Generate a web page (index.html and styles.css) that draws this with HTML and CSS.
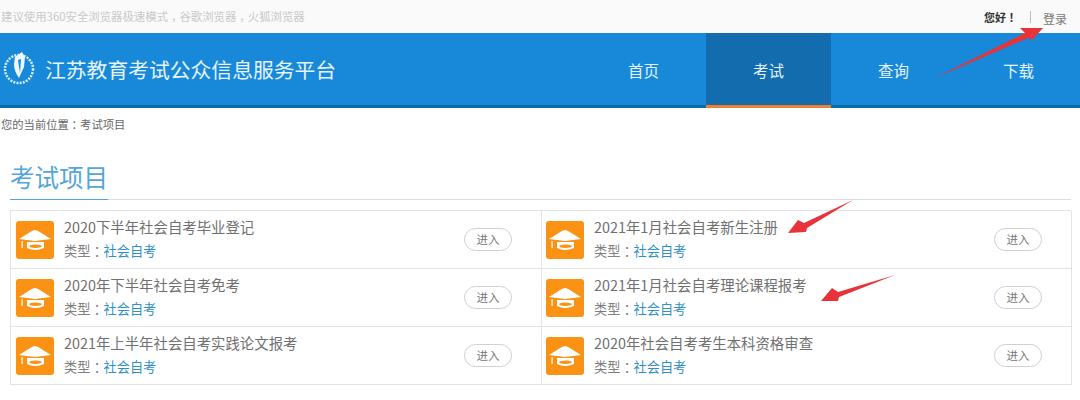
FILE: index.html
```html
<!DOCTYPE html>
<html lang="zh-CN">

<head>
  <meta charset="UTF-8">
  <title>江苏教育考试公众信息服务平台</title>
  <link rel="stylesheet" href="styles.css">
</head>

<body>

  <svg width="0" height="0" class="defs">
    <symbol id="cap" viewBox="0 0 38 38">
      <path d="M19 9 Q21 9 23 10.5 L35 18 L19 20 L3 18 L15 10.5 Q17 9 19 9 Z" fill="#fff" />
      <path d="M11 21 L28 21 L28 27 Q19 31 11 27 Z" fill="#fff" />
      <path d="M13.5 24.5 Q19 22.5 25.5 24.5 L25.5 26 Q19 28 13.5 26 Z" fill="#fb9214" />
      <rect x="5.5" y="20" width="1.2" height="7" fill="#fff" />
    </symbol>
  </svg>

  <div class="topbar">
    <span class="tip">建议使用360安全浏览器极速模式<span class="mark">，</span>谷歌浏览器<span class="mark">，</span>火狐浏览器</span>
    <div class="user">
      <b>您好<span class="mark">！</span></b>
      <i class="sep"></i>
      <a href="#">登录</a>
    </div>
  </div>

  <div class="header">
    <div class="brand">
      <svg class="logo" width="34" height="36" viewBox="0 0 34 36">
        <circle cx="17" cy="20" r="14" fill="none" stroke="#d5ecfa" stroke-width="2.5" stroke-dasharray="2 1.2" />
        <path d="M10 20 Q13 27 17 29 Q22 26 24 20 Z" fill="#1789d8" />
        <path d="M13 8 L20 3 L23 8 L22 18 L17 29 Q12 22 12 15 Z" fill="#eef7fd" />
        <path d="M16 11 L19 10 L18 24 Z" fill="#1789d8" />
      </svg>
      <span class="brand-name">江苏教育考试公众信息服务平台</span>
    </div>
    <ul class="nav">
      <li>首页</li>
      <li class="active">考试</li>
      <li>查询</li>
      <li>下载</li>
    </ul>
  </div>

  <div class="crumb">您的当前位置<span class="mark">：</span>考试项目</div>

  <div class="section">
    <div class="section-title"><h2>考试项目</h2></div>

    <div class="list">
      <div class="item">
        <svg class="cap"><use href="#cap" /></svg>
        <div class="info">
          <p class="name">2020下半年社会自考毕业登记</p>
          <p class="type">类型<span class="mark">：</span><a href="#">社会自考</a></p>
        </div>
        <span class="button">进入</span>
      </div>
      <div class="item">
        <svg class="cap"><use href="#cap" /></svg>
        <div class="info">
          <p class="name">2021年1月社会自考新生注册</p>
          <p class="type">类型<span class="mark">：</span><a href="#">社会自考</a></p>
        </div>
        <span class="button">进入</span>
      </div>
      <div class="item">
        <svg class="cap"><use href="#cap" /></svg>
        <div class="info">
          <p class="name">2020年下半年社会自考免考</p>
          <p class="type">类型<span class="mark">：</span><a href="#">社会自考</a></p>
        </div>
        <span class="button">进入</span>
      </div>
      <div class="item">
        <svg class="cap"><use href="#cap" /></svg>
        <div class="info">
          <p class="name">2021年1月社会自考理论课程报考</p>
          <p class="type">类型<span class="mark">：</span><a href="#">社会自考</a></p>
        </div>
        <span class="button">进入</span>
      </div>
      <div class="item">
        <svg class="cap"><use href="#cap" /></svg>
        <div class="info">
          <p class="name">2021年上半年社会自考实践论文报考</p>
          <p class="type">类型<span class="mark">：</span><a href="#">社会自考</a></p>
        </div>
        <span class="button">进入</span>
      </div>
      <div class="item">
        <svg class="cap"><use href="#cap" /></svg>
        <div class="info">
          <p class="name">2020年社会自考考生本科资格审查</p>
          <p class="type">类型<span class="mark">：</span><a href="#">社会自考</a></p>
        </div>
        <span class="button">进入</span>
      </div>
    </div>
  </div>

  <!-- red arrows drawn over the screenshot -->
  <svg class="arrows" width="1080" height="400" viewBox="0 0 1080 400">
    <polygon points="935,78 1025,33 1020,28 1043,28 1032,40 1028,38" />
    <polygon points="853,200 804,223 798,220 788,233 806,232 807,228" />
    <polygon points="895,275 838,292 832,288 821,301 838,301 839,297" />
  </svg>

</body>

</html>
```

FILE: styles.css
```css
html,
body {
  margin: 0;
  padding: 0;
  background-color: #fff;
  font-family: "Noto Sans CJK SC", "Liberation Sans", sans-serif;
  color: #666;
}

body {
  position: relative;
  width: 1080px;
  height: 400px;
  overflow: hidden;
}

.defs {
  display: block;
  height: 0;
}

p,
h2,
ul {
  margin: 0;
  padding: 0;
}

a {
  text-decoration: none;
}

/* centred full-width punctuation */
.mark {
  font-feature-settings: "halt";
  padding: 0 0.25em;
}

.topbar {
  display: flex;
  justify-content: space-between;
  align-items: center;
  height: 33px;
  padding: 0 13px 0 1px;
  background-color: #fafafa;
}

.tip {
  font-size: 11.4px;
  color: #c9c9c9;
  margin-top: -2px;
}

.user {
  display: flex;
  align-items: center;
  font-size: 11px;
  color: #333;
}

.user b {
  width: 46px;
}

.user a {
  color: #777;
  font-size: 12px;
  margin-top: 4px;
}

.sep {
  width: 1px;
  height: 12px;
  margin-right: 12px;
  background-color: #bbb;
}

.header {
  display: flex;
  justify-content: space-between;
  height: 72px;
  background-color: #1789d8;
  border-bottom: 3px solid #0b6aa8;
}

.brand {
  display: flex;
  align-items: center;
  padding-left: 2px;
}

.logo {
  margin-top: -4px;
}

.brand-name {
  margin-left: 9px;
  font-size: 20.8px;
  color: #e6f5fe;
}

.nav {
  display: flex;
  list-style: none;
  margin-right: -1px;
}

.nav li {
  width: 125px;
  height: 72px;
  line-height: 74px;
  text-align: center;
  font-size: 15.5px;
  color: #e6f5fe;
}

.nav .active {
  height: 72px;
  background-color: #126cae;
  border-bottom: 3px solid #ee7f2e;
}

.crumb {
  height: 33px;
  line-height: 32px;
  padding-left: 1px;
  font-size: 11.3px;
  color: #666;
}

.section {
  padding: 17px 9px 0 10px;
}

.section-title {
  height: 41px;
  border-bottom: 1px solid #ddd;
}

.section-title h2 {
  display: inline-block;
  height: 41px;
  line-height: 38px;
  font-size: 24.5px;
  font-weight: 400;
  color: #54a5d8;
  border-bottom: 1px solid #54a5d8;
}

.list {
  display: grid;
  grid-template-columns: 531px 530px;
  margin-top: 10px;
  border-top: 1px solid #e3e3e3;
  border-left: 1px solid #e3e3e3;
}

.item {
  display: flex;
  align-items: center;
  box-sizing: border-box;
  height: 58px;
  padding: 0 29px 0 5px;
  border-right: 1px solid #e3e3e3;
  border-bottom: 1px solid #e3e3e3;
}

.item:nth-child(even) {
  padding-left: 4px;
}

.cap {
  flex: none;
  width: 38px;
  height: 38px;
  border-radius: 3px;
  background-color: #fb9214;
}

.info {
  flex: 1;
  margin: -2px 0 0 10px;
}

.name {
  height: 24px;
  line-height: 22px;
  font-size: 14.4px;
  color: #707070;
}

.type {
  line-height: 22px;
  font-size: 13.2px;
  color: #808080;
}

.type a {
  color: #2f8fc8;
}

.button {
  box-sizing: border-box;
  width: 48px;
  height: 23px;
  line-height: 21px;
  text-align: center;
  font-size: 11.5px;
  color: #777;
  background-color: #fff;
  border: 1px solid #d0d0d0;
  border-radius: 12px;
}

.arrows {
  position: absolute;
  top: 0;
  left: 0;
}

.arrows polygon {
  fill: #e8333a;
}
```
